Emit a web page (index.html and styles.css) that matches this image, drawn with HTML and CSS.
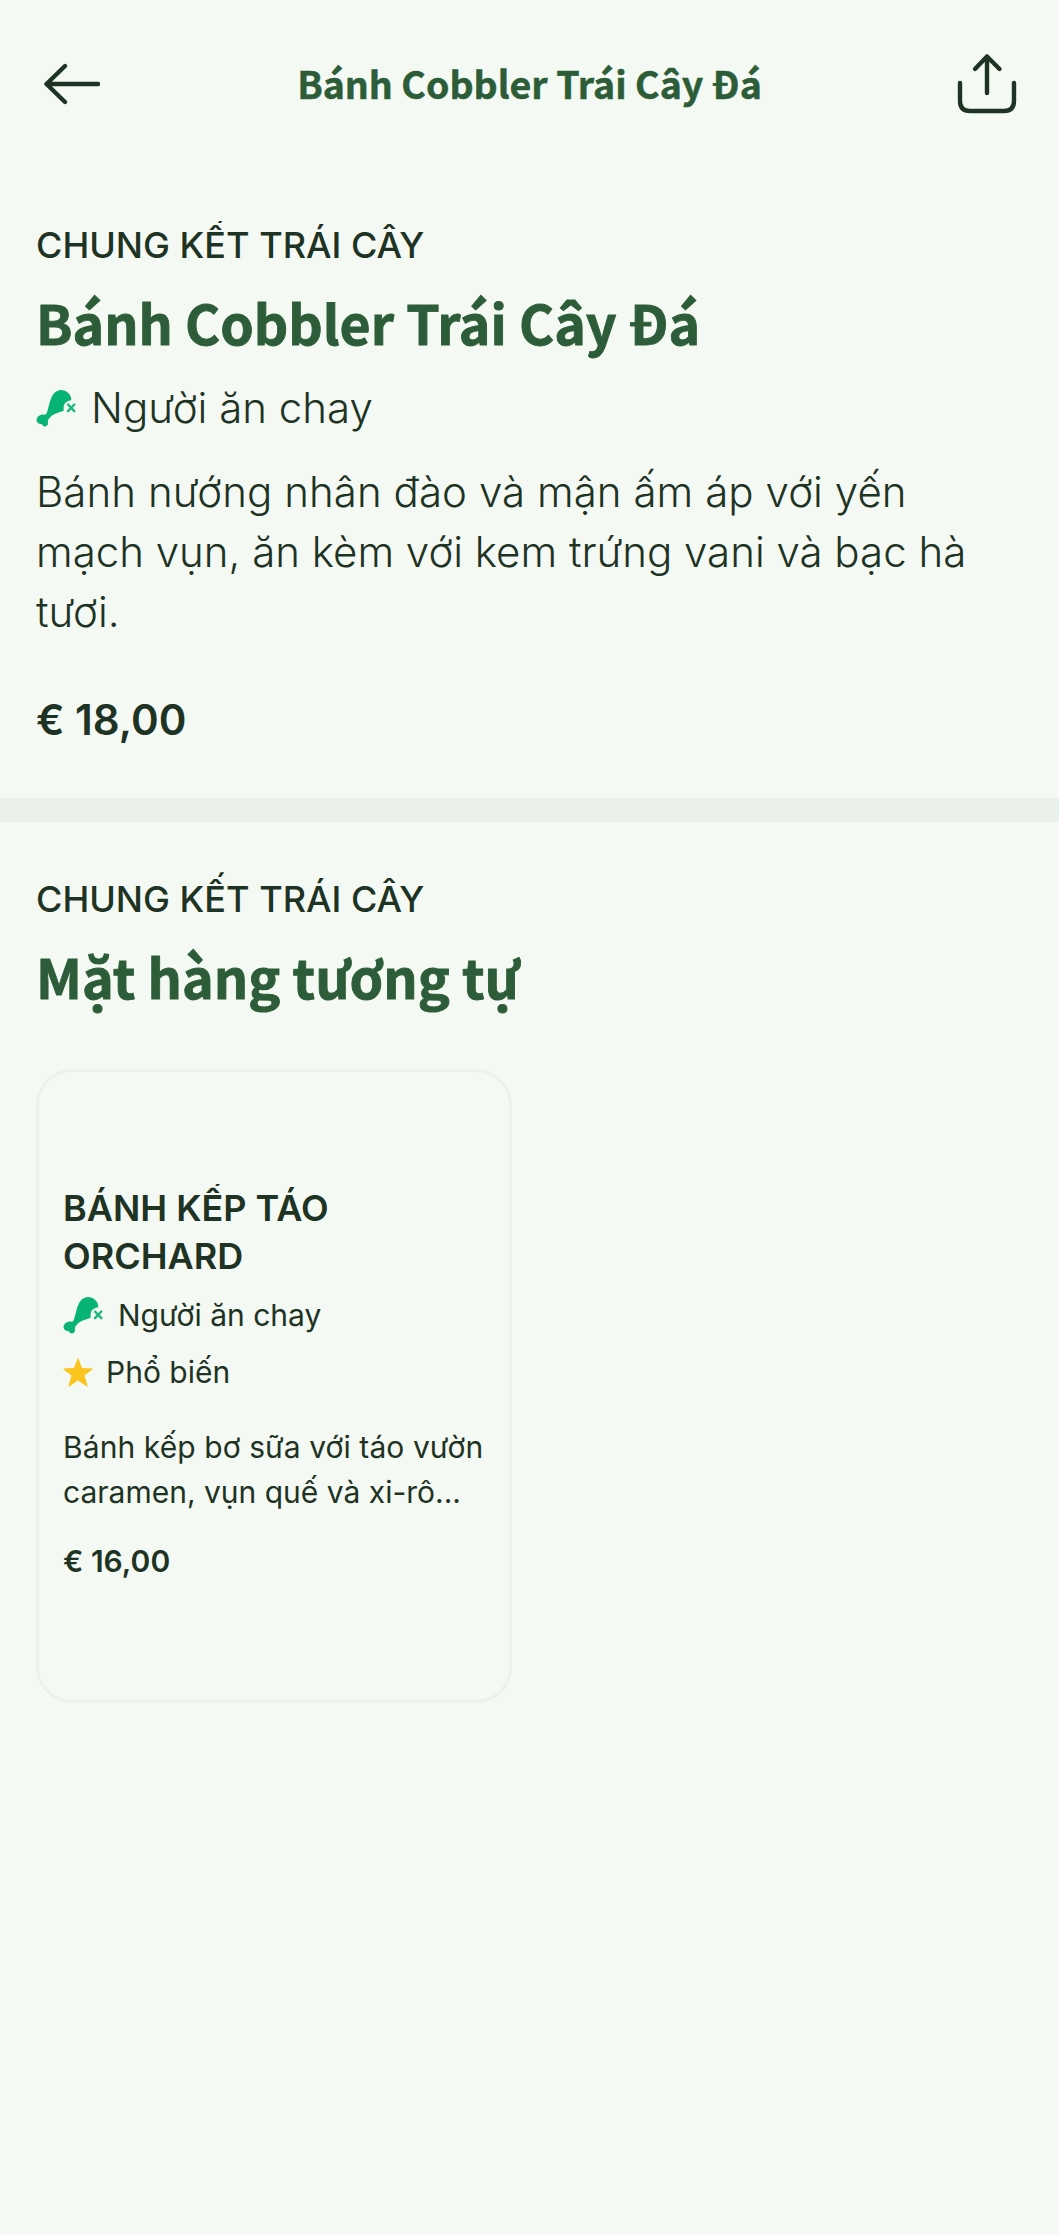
FILE: index.html
```html
<!DOCTYPE html>
<html lang="vi">
<head>
<meta charset="utf-8">
<title>Bánh Cobbler Trái Cây Đá</title>
<link rel="stylesheet" href="styles.css">
</head>
<body>
<svg class="defs" aria-hidden="true">
  <symbol id="drumstick" viewBox="48 56 120 116">
    <path fill="#08b474" d="M81 126C87 108 90 83 101 70C108 61 118 58 127 59C142 60 154 73 154 89C140 90 130 100 131 112L131 121C116 127 102 129 91 140C85 146 82 150 84 156C85 169 70 172 66 161C55 162 46 153 51 143C55 133 68 130 75 133Q79 132 81 126Z"/>
    <path fill="none" stroke="#1cb87c" stroke-width="7" stroke-linecap="round" d="M144 102L163 122M163 102L144 122"/>
  </symbol>
</svg>
<header class="topbar">
  <svg class="back" viewBox="0 0 60 48"><path d="M25 6L6.500 24L25 42M6.500 24H58"/></svg>
  <h2 class="topbar-title">Bánh Cobbler Trái Cây Đá</h2>
  <svg class="share" viewBox="0 0 64 64"><path d="M5 31V49Q5 59 15 59H49Q59 59 59 49V31M32 41V4.500M20 17L32 4.500L44.500 17"/></svg>
</header>
<main>
  <section class="item">
    <p class="eyebrow clipped">CHUNG KẾT TRÁI CÂY</p>
    <h1 class="title">Bánh Cobbler Trái Cây Đá</h1>
    <p class="diet"><svg class="drumstick"><use href="#drumstick"/></svg>Người ăn chay</p>
    <p class="description">Bánh nướng nhân đào và mận ấm áp với yến mạch vụn, ăn kèm với kem trứng vani và bạc hà tươi.</p>
    <p class="price">€ 18,00</p>
  </section>
  <section class="similar">
    <p class="eyebrow">CHUNG KẾT TRÁI CÂY</p>
    <h1 class="title">Mặt hàng tương tự</h1>
    <article class="card">
      <h3 class="card-title clipped">BÁNH KẾP TÁO ORCHARD</h3>
      <p class="tag"><svg class="drumstick"><use href="#drumstick"/></svg>Người ăn chay</p>
      <p class="tag popular"><svg class="star" viewBox="0 0 30 29"><path d="M15 1L18.500 10.500L29 11L20.800 17.300L24 28L15 21.800L6 28L9.200 17.300L1 11L11.500 10.500Z"/></svg>Phổ biến</p>
      <p class="card-text">Bánh kếp bơ sữa với táo vườn caramen, vụn quế và xi-rô...</p>
      <p class="card-price">€ 16,00</p>
    </article>
  </section>
</main>
</body>
</html>
```
FILE: styles.css
```css
* { box-sizing: border-box; margin: 0; }
body { background: #f4f9f3; color: #1e3323; font-family: Inter, "Noto Sans", sans-serif; min-height: 2235px; }
.defs { display: none; }
.topbar { height: 168px; padding: 0 40px; display: flex; align-items: center; justify-content: space-between; }
.topbar svg { fill: none; stroke: #1e3323; stroke-width: 4.4; stroke-linecap: round; stroke-linejoin: round; flex: none; }
.back { width: 60px; height: 48px; }
.share { width: 64px; height: 64px; }
.topbar-title, .title { font-family: "Noto Sans CJK SC", "Noto Sans", sans-serif; font-weight: 700; color: #2d5d38; }
.topbar-title { padding: 0 0 2px 4px; font-size: 37.5px; line-height: 54px; -webkit-text-stroke: 0.5px #2d5d38; }
.item { padding: 53px 36px 48px; border-bottom: 24px solid #eaf0ea; }
.eyebrow { font-size: 36px; line-height: 48px; font-weight: 500; }
.clipped { overflow: hidden; }
.title { margin-top: 20px; font-size: 53.6px; line-height: 66px; -webkit-text-stroke: 0.9px #2d5d38; }
.diet { margin-top: 23px; display: flex; align-items: center; gap: 15px; font-size: 42px; line-height: 60px; font-weight: 300; }
.drumstick { width: 40px; height: 39px; flex: none; }
.description { margin-top: 24px; font-size: 42px; line-height: 60px; font-weight: 300; }
.description::first-line { letter-spacing: 0.065px; }
.price { margin-top: 48px; font-size: 42px; line-height: 60px; font-weight: 600; }
.similar { padding: 53px 36px 0; }
.similar .title { font-size: 53.8px; }
.card { width: 476px; height: 634px; margin-top: 60px; padding: 112px 20px 0 24px; border: 3px solid #ecf2eb; border-radius: 36px; }
.card-title { font-size: 36px; line-height: 48px; font-weight: 600; }
.tag { margin-top: 13px; display: flex; align-items: center; gap: 15px; font-size: 30px; line-height: 45px; }
.popular { margin-top: 12px; gap: 13px; }
.star { width: 30px; height: 29px; fill: #fbc41f; stroke: #fbc41f; stroke-width: 1.2; stroke-linejoin: round; }
.card-text { margin-top: 30px; font-size: 30px; line-height: 45px; }
.card-text::first-line { letter-spacing: 0.08px; }
.card-price { margin-top: 24px; font-size: 30px; line-height: 45px; font-weight: 600; }
```
